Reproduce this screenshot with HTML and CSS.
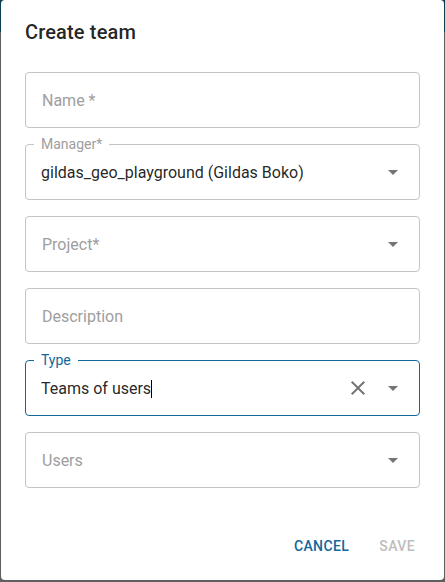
FILE: index.html
```html
<!DOCTYPE html>
<html lang="en">
<head>
<meta charset="utf-8">
<title>Create team</title>
<link rel="stylesheet" href="styles.css">
</head>
<body>
<div class="dialog" role="dialog">
  <h2 class="title">Create team</h2>
  <div class="content">
    <div class="field">
      <span class="placeholder">Name *</span>
    </div>
    <div class="field">
      <span class="float-label">Manager*</span>
      <span class="value">gildas_geo_playground (Gildas Boko)</span>
      <span class="adorn">
        <svg class="icon" viewBox="0 0 24 24"><path d="M7 10l5 5 5-5z"/></svg>
      </span>
    </div>
    <div class="field">
      <span class="placeholder">Project*</span>
      <span class="adorn">
        <svg class="icon" viewBox="0 0 24 24"><path d="M7 10l5 5 5-5z"/></svg>
      </span>
    </div>
    <div class="field">
      <span class="placeholder">Description</span>
    </div>
    <div class="field focused">
      <span class="float-label">Type</span>
      <span class="value">Teams of users<span class="caret"></span></span>
      <span class="adorn">
        <svg class="icon" viewBox="0 0 24 24"><path d="M19 6.41 17.59 5 12 10.59 6.41 5 5 6.41 10.59 12 5 17.59 6.41 19 12 13.41 17.59 19 19 17.59 13.41 12z"/></svg>
        <svg class="icon" viewBox="0 0 24 24"><path d="M7 10l5 5 5-5z"/></svg>
      </span>
    </div>
    <div class="field">
      <span class="placeholder">Users</span>
      <span class="adorn">
        <svg class="icon" viewBox="0 0 24 24"><path d="M7 10l5 5 5-5z"/></svg>
      </span>
    </div>
  </div>
  <div class="actions">
    <button class="btn primary">Cancel</button>
    <button class="btn disabled">Save</button>
  </div>
</div>
</body>
</html>
```

FILE: styles.css
```css
html, body {
  margin: 0;
  padding: 0;
}
body {
  width: 445px;
  height: 582px;
  overflow: hidden;
  background: linear-gradient(#0b3f50 0, #0b3f50 32px, #5f5f5f 32px);
  font-family: Roboto, "Liberation Sans", Arial, sans-serif;
}
.dialog {
  margin-left: 1px;
  width: 443px;
  height: 580px;
  background: #fff;
  border-radius: 4px;
  display: flex;
  flex-direction: column;
  box-sizing: border-box;
}
.title {
  margin: 0;
  padding: 16px 24px;
  font-size: 20px;
  line-height: 32px;
  font-weight: 500;
  color: rgba(0, 0, 0, 0.87);
  letter-spacing: 0.15px;
}
.content {
  flex: 1;
  padding: 8px 24px 0 24px;
  display: flex;
  flex-direction: column;
  gap: 16px;
}
.field {
  position: relative;
  height: 56px;
  box-sizing: border-box;
  border: 1px solid #c4c4c4;
  border-radius: 4px;
  display: flex;
  align-items: center;
  padding: 0 14px 0 16px;
  font-size: 16px;
}
.field.focused {
  border-color: #12679b;
}
.placeholder {
  flex: 1;
  color: #9e9e9e;
}
.value {
  flex: 1;
  color: rgba(0, 0, 0, 0.87);
  margin-left: -1px;
}
.caret {
  display: inline-block;
  width: 1px;
  height: 18px;
  background: #000;
  vertical-align: -4px;
}
.float-label {
  position: absolute;
  top: -9px;
  left: 8px;
  padding: 0 7px;
  background: #fff;
  font-size: 14px;
  line-height: 16px;
  color: #9e9e9e;
}
.focused .float-label {
  color: #12679b;
}
.adorn {
  display: flex;
  align-items: center;
  gap: 11px;
}
.icon {
  width: 24px;
  height: 24px;
  fill: rgba(0, 0, 0, 0.54);
  display: block;
}
.actions {
  display: flex;
  justify-content: flex-end;
  gap: 14px;
  padding: 8px 21px 16px 8px;
}
.btn {
  font-family: Roboto, "Liberation Sans", Arial, sans-serif;
  font-size: 14px;
  font-weight: 500;
  line-height: 20px;
  letter-spacing: 0.4px;
  text-transform: uppercase;
  padding: 8px 8px;
  border: 0;
  background: transparent;
  border-radius: 4px;
}
.btn.primary {
  color: #12679b;
}
.btn.disabled {
  color: #bdbdbd;
}
```
